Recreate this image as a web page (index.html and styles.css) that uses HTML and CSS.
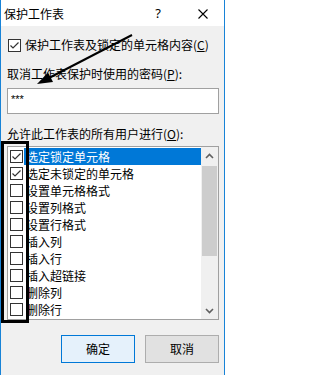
FILE: index.html
```html
<!DOCTYPE html>
<html lang="zh-CN">
<head>
<meta charset="utf-8">
<title>保护工作表</title>
<link rel="stylesheet" href="styles.css">
</head>
<body>
<div class="window">
  <div class="titlebar">
    <span class="title">保护工作表</span>
    <span class="help">?</span>
    <span class="close"><svg width="10" height="10" viewBox="0 0 10 10"><path d="M0.5 0.5 L9.5 9.5 M9.5 0.5 L0.5 9.5" stroke="#000" stroke-width="1.1" fill="none"/></svg></span>
  </div>
  <div class="content">
    <div class="check-row">
      <span class="box"><svg width="11" height="11" viewBox="0 0 11 11"><path d="M1.5 5.5 L4 8 L9.5 2.5" stroke="#333" stroke-width="1.2" fill="none"/></svg></span>
      <span class="check-label">保护工作表及锁定的单元格内容(<u>C</u>)</span>
    </div>
    <div class="field-label pw-label">取消工作表保护时使用的密码(<u>P</u>):</div>
    <div class="input">***</div>
    <div class="field-label list-label">允许此工作表的所有用户进行(<u>O</u>):</div>
    <div class="list">
      <div class="items">
        <div class="item selected"><span class="box"><svg width="11" height="11" viewBox="0 0 11 11"><path d="M1.5 5.5 L4 8 L9.5 2.5" stroke="#333" stroke-width="1.2" fill="none"/></svg></span><span class="item-text">选定锁定单元格</span></div>
        <div class="item"><span class="box"><svg width="11" height="11" viewBox="0 0 11 11"><path d="M1.5 5.5 L4 8 L9.5 2.5" stroke="#333" stroke-width="1.2" fill="none"/></svg></span><span class="item-text">选定未锁定的单元格</span></div>
        <div class="item"><span class="box"></span><span class="item-text">设置单元格格式</span></div>
        <div class="item"><span class="box"></span><span class="item-text">设置列格式</span></div>
        <div class="item"><span class="box"></span><span class="item-text">设置行格式</span></div>
        <div class="item"><span class="box"></span><span class="item-text">插入列</span></div>
        <div class="item"><span class="box"></span><span class="item-text">插入行</span></div>
        <div class="item"><span class="box"></span><span class="item-text">插入超链接</span></div>
        <div class="item"><span class="box"></span><span class="item-text">删除列</span></div>
        <div class="item"><span class="box"></span><span class="item-text">删除行</span></div>
      </div>
      <div class="scrollbar">
        <div class="sb-arrow"><svg width="9" height="6" viewBox="0 0 9 6"><path d="M1 5 L4.5 1.5 L8 5" stroke="#606060" stroke-width="1.6" fill="none"/></svg></div>
        <div class="sb-thumb"></div>
        <div class="sb-space"></div>
        <div class="sb-arrow"><svg width="9" height="6" viewBox="0 0 9 6"><path d="M1 1 L4.5 4.5 L8 1" stroke="#606060" stroke-width="1.6" fill="none"/></svg></div>
      </div>
    </div>
    <div class="buttons">
      <div class="btn primary">确定</div>
      <div class="btn">取消</div>
    </div>
  </div>
  <div class="mark-box"></div>
  <svg class="arrow" width="226" height="375" viewBox="0 0 226 375">
    <line x1="132" y1="35" x2="47" y2="79" stroke="#000" stroke-width="2"/>
    <polygon points="37,84 48,72.5 53,82" fill="#000"/>
  </svg>
</div>
</body>
</html>
```

FILE: styles.css
```css
html, body {
  margin: 0;
  padding: 0;
  background: #fff;
}
body {
  font-family: "Noto Sans CJK SC", "Noto Sans", sans-serif;
  font-size: 12px;
  color: #000;
}
.window {
  position: relative;
  width: 225px;
  height: 375px;
  box-sizing: border-box;
  border-left: 1px solid #1883d7;
  border-right: 1px solid #1883d7;
  background: #f0f0f0;
  overflow: hidden;
}
.titlebar {
  height: 26px;
  background: #fff;
  display: flex;
  align-items: center;
  padding-left: 3px;
  padding-right: 6px;
}
.title {
  line-height: 16px;
  margin-top: 1px;
}
.help {
  margin-left: auto;
  width: 20px;
  margin-right: 20px;
  text-align: center;
  font-family: "Noto Sans", sans-serif;
  font-size: 13px;
  line-height: 16px;
}
.close {
  width: 30px;
  display: flex;
  justify-content: center;
  align-items: center;
  height: 10px;
  margin-top: 1px;
}
.close svg { display: block; }
.content {
  padding: 0 5px 0 6px;
}
.check-row {
  display: flex;
  align-items: center;
  height: 16px;
  margin-top: 11px;
}
.box {
  width: 13px;
  height: 13px;
  box-sizing: border-box;
  border: 1px solid #333;
  background: #fff;
  flex: none;
  display: flex;
  align-items: center;
  justify-content: center;
}
.box svg { display: block; }
.check-row .box {
  margin-left: 1px;
}
.check-label {
  margin-left: 4px;
  line-height: 16px;
  white-space: nowrap;
}
.field-label {
  line-height: 16px;
  height: 16px;
  white-space: nowrap;
}
.pw-label {
  margin-top: 13px;
}
.input {
  margin-top: 6px;
  height: 26px;
  box-sizing: border-box;
  border: 1px solid #a0a0a0;
  background: #fff;
  padding: 2px 0 0 3px;
  line-height: 16px;
  font-family: "Liberation Sans", sans-serif;
  font-size: 11px;
}
.list-label {
  margin-top: 12px;
}
.list {
  margin-top: 4px;
  height: 174px;
  box-sizing: border-box;
  border: 1px solid #a0a0a0;
  background: #fff;
  display: flex;
}
.items {
  flex: 1;
  padding-top: 1px;
  min-width: 0;
}
.item {
  height: 17px;
  display: flex;
  align-items: center;
}
.item .box {
  margin-left: 2px;
}
.item-text {
  margin-left: 1px;
  padding-left: 2px;
  flex: 1;
  height: 17px;
  line-height: 17px;
  white-space: nowrap;
}
.item.selected .item-text {
  background: #0078d7;
  color: #fff;
}
.scrollbar {
  width: 17px;
  flex: none;
  background: #f0f0f0;
  display: flex;
  flex-direction: column;
}
.sb-arrow {
  height: 17px;
  display: flex;
  align-items: center;
  justify-content: center;
  flex: none;
}
.sb-arrow svg { display: block; }
.sb-thumb {
  margin: 2px 1px 0 1px;
  height: 90px;
  background: #cdcdcd;
  flex: none;
}
.sb-space {
  flex: 1;
}
.buttons {
  margin-top: 15px;
  display: flex;
  justify-content: flex-end;
  gap: 10px;
}
.btn {
  width: 74px;
  height: 28px;
  box-sizing: border-box;
  border: 1px solid #adadad;
  background: #e1e1e1;
  display: flex;
  align-items: center;
  justify-content: center;
  line-height: 16px;
}
.btn.primary {
  border-color: #0078d7;
  background: #e5f1fb;
}
.mark-box {
  position: absolute;
  left: 0px;
  top: 141px;
  width: 28px;
  height: 182px;
  box-sizing: border-box;
  border: 3px solid #000;
}
.arrow {
  position: absolute;
  left: -1px;
  top: 0;
  pointer-events: none;
}
```
